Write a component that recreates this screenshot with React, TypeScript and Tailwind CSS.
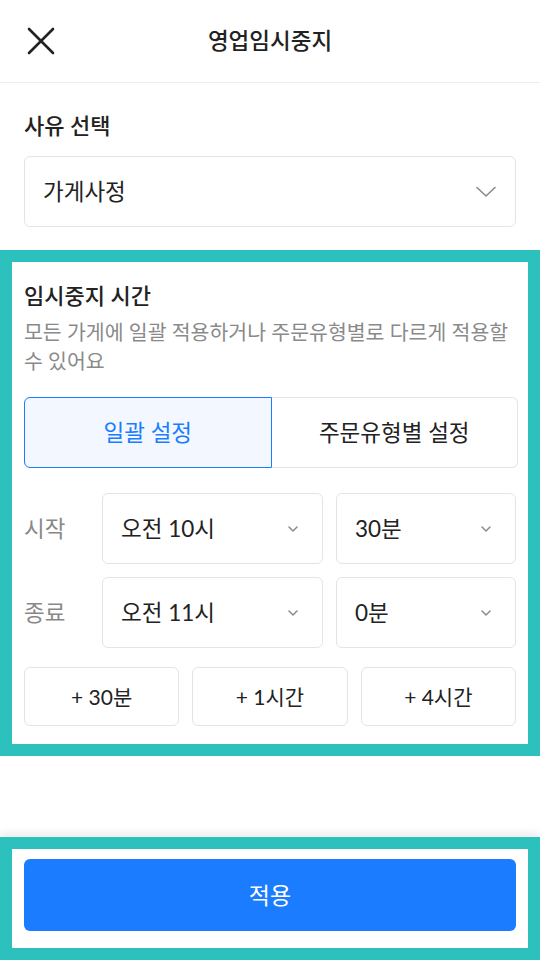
import React, { useState } from 'react';

const ChevronBig = () => (
  <svg width="20" height="12" viewBox="0 0 20 12" fill="none">
    <path d="M1 1.5 L10 10 L19 1.5" stroke="#8a8a8a" strokeWidth="1.6" strokeLinecap="round" strokeLinejoin="round" />
  </svg>
);

const ChevronSmall = () => (
  <svg width="10" height="6" viewBox="0 0 10 6" fill="none">
    <path d="M1 1 L5 5 L9 1" stroke="#8a8a8a" strokeWidth="1.5" strokeLinecap="round" strokeLinejoin="round" />
  </svg>
);

const TimeSelect = ({ value, wide }: { value: string; wide?: boolean }) => (
  <div
    className={`${wide ? 'w-[221px]' : 'flex-1'} pl-[18px] pr-[24px] h-[71px] flex items-center justify-between rounded-md border border-[#e4e4e4] bg-white`}
  >
    <span className="text-[22.5px] leading-[30px] text-[#222]">{value}</span>
    <ChevronSmall />
  </div>
);

const App = () => {
  const [mode, setMode] = useState<'all' | 'type'>('all');

  const quickAdds = ['+ 30분', '+ 1시간', '+ 4시간'];

  return (
    <div
      className="w-[540px] h-[960px] flex flex-col bg-white text-[#222]"
      style={{ fontFamily: "Lato, 'Noto Sans CJK KR', sans-serif" }}
    >
      {/* header */}
      <div className="h-[83px] flex items-center border-b border-[#eeeeee] shrink-0">
        <div className="w-[90px] pl-[27px] flex items-center">
          <svg width="28" height="28" viewBox="0 0 28 28" fill="none">
            <path d="M2 2 L26 26 M26 2 L2 26" stroke="#222" strokeWidth="2.6" strokeLinecap="round" />
          </svg>
        </div>
        <div className="flex-1 text-center text-[22.5px] font-medium">영업임시중지</div>
        <div className="w-[90px]" />
      </div>

      {/* reason */}
      <div className="px-6 pt-[29px]">
        <div className="text-[22px] leading-[28px] font-medium">사유 선택</div>
        <div className="mt-4 h-[71px] flex items-center justify-between rounded-md border border-[#e4e4e4] pl-[18px] pr-[19px]">
          <span className="text-[22.5px] leading-[30px]">가게사정</span>
          <ChevronBig />
        </div>
      </div>

      {/* pause time */}
      <div className="mt-[23px] border-[12px] border-[#2cc1bd] bg-white px-3 pt-5 pb-[18px]">
        <div className="text-[22px] leading-[28px] font-medium">임시중지 시간</div>
        <p className="mt-2 text-[20.5px] leading-[29px] text-[#8a8a8a]">
          모든 가게에 일괄 적용하거나 주문유형별로 다르게 적용할 수 있어요
        </p>

        <div className="mt-[21px] -mr-0.5 h-[71px] flex">
          <button
            onClick={() => setMode('all')}
            className={`flex-1 rounded-l-md text-[22.5px] ${
              mode === 'all'
                ? 'border-[1.5px] border-[#1a7cff] bg-[#f3f7ff] text-[#1a7cff]'
                : 'border border-r-0 border-[#e4e4e4] bg-white text-[#222]'
            }`}
          >
            일괄 설정
          </button>
          <button
            onClick={() => setMode('type')}
            className={`flex-1 rounded-r-md text-[22.5px] ${
              mode === 'type'
                ? 'border-[1.5px] border-[#1a7cff] bg-[#f3f7ff] text-[#1a7cff]'
                : 'border border-l-0 border-[#e4e4e4] bg-white text-[#222]'
            }`}
          >
            주문유형별 설정
          </button>
        </div>

        <div className="mt-[25px] flex flex-col gap-[13px]">
          <div className="flex items-center">
            <span className="w-[78px] text-[22.5px] text-[#888]">시작</span>
            <div className="flex-1 flex gap-[13px]">
              <TimeSelect value="오전 10시" wide />
              <TimeSelect value="30분" />
            </div>
          </div>
          <div className="flex items-center">
            <span className="w-[78px] text-[22.5px] text-[#888]">종료</span>
            <div className="flex-1 flex gap-[13px]">
              <TimeSelect value="오전 11시" wide />
              <TimeSelect value="0분" />
            </div>
          </div>
        </div>

        <div className="mt-[19px] grid grid-cols-3 gap-[13px]">
          {quickAdds.map((q) => (
            <button key={q} className="h-[59px] rounded-md border border-[#e4e4e4] bg-white text-[21px] text-[#222]">
              {q}
            </button>
          ))}
        </div>
      </div>

      <div className="flex-1" />

      {/* bottom */}
      <div className="shrink-0 border-[12px] border-[#2cc1bd] bg-white px-3 pt-[10px] pb-[17px] shadow-[0_-4px_8px_rgba(0,0,0,0.08)]">
        <button className="w-full h-[72px] rounded-md bg-[#1b7cff] text-white text-[23px]">적용</button>
      </div>
    </div>
  );
};

export default App;
